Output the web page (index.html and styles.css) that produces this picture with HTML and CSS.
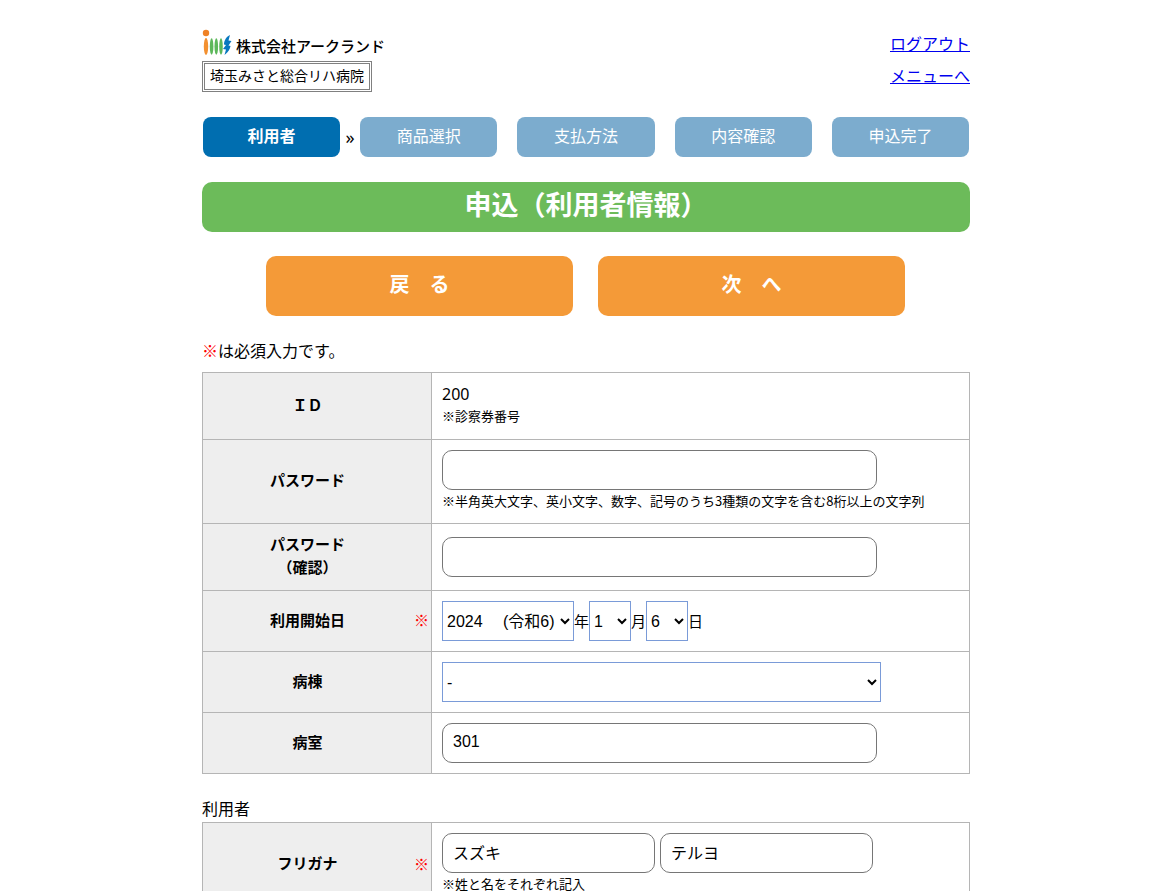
FILE: index.html
```html
<!DOCTYPE html>
<html lang="ja">
<head>
<meta charset="utf-8">
<meta name="viewport" content="width=device-width, initial-scale=1">
<title>申込（利用者情報）</title>
<link rel="stylesheet" href="styles.css">
</head>
<body>
<div class="page">
  <header class="header">
    <div class="brand">
      <div class="logo">
        <svg class="logo-mark" viewBox="0 0 30 28" aria-hidden="true">
          <circle cx="4" cy="4" r="3.200" fill="#ef8226"/>
          <ellipse cx="4" cy="17.500" rx="2.200" ry="8.500" fill="#f39030"/>
          <ellipse cx="9.600" cy="17.500" rx="1.800" ry="8.300" fill="#5cb85a"/>
          <ellipse cx="14.300" cy="17.500" rx="1.800" ry="8.300" fill="#5cb85a"/>
          <ellipse cx="19" cy="17.500" rx="1.800" ry="8.300" fill="#5cb85a"/>
          <path d="M28 6 C24.500 7.500 22 11.500 22 15.500 L24 16 L21 20 L24 20.500 L22.500 26 C26.500 23 28 20 28.500 17 L26.500 16.500 L29.500 12 L26.500 11.500 Z" fill="#0878bf"/>
        </svg>
        <span>株式会社アークランド</span>
      </div>
      <div class="hospital">埼玉みさと総合リハ病院</div>
    </div>
    <nav class="links">
      <a href="#">ログアウト</a>
      <a href="#">メニューへ</a>
    </nav>
  </header>

  <ol class="steps">
    <li class="step current">利用者</li>
    <li class="step">商品選択</li>
    <li class="step">支払方法</li>
    <li class="step">内容確認</li>
    <li class="step">申込完了</li>
  </ol>

  <h1 class="title">申込（利用者情報）</h1>

  <form>
    <div class="actions">
      <button type="button" class="action">戻　る</button>
      <button type="button" class="action">次　へ</button>
    </div>

    <p class="notice"><span class="required">※</span>は必須入力です。</p>

    <table class="form-table">
      <tr>
        <th scope="row"><div class="head"><span class="label">ＩＤ</span></div></th>
        <td><div class="value">200</div><div class="hint hint-id">※診察券番号</div></td>
      </tr>
      <tr>
        <th scope="row"><div class="head"><label class="label" for="pw">パスワード</label></div></th>
        <td><input class="field" type="password" id="pw"><div class="hint">※半角英大文字、英小文字、数字、記号のうち3種類の文字を含む8桁以上の文字列</div></td>
      </tr>
      <tr>
        <th scope="row"><div class="head"><label class="label" for="pw2">パスワード<br>（確認）</label></div></th>
        <td><input class="field" type="password" id="pw2"></td>
      </tr>
      <tr>
        <th scope="row"><div class="head"><label class="label" for="year">利用開始日</label><span class="required">※</span></div></th>
        <td>
          <div class="date">
            <select class="select year" id="year"><option>2024　 (令和6)</option></select><label for="year">年</label>
            <select class="select short" id="month"><option>1</option></select><label for="month">月</label>
            <select class="select short" id="day"><option>6</option></select><label for="day">日</label>
          </div>
        </td>
      </tr>
      <tr>
        <th scope="row"><div class="head"><label class="label" for="ward">病棟</label></div></th>
        <td><select class="select ward" id="ward"><option>-</option></select></td>
      </tr>
      <tr>
        <th scope="row"><div class="head"><label class="label" for="room">病室</label></div></th>
        <td><input class="field" type="text" id="room" value="301"></td>
      </tr>
    </table>

    <h2 class="section">利用者</h2>
    <table class="form-table">
      <tr>
        <th scope="row"><div class="head"><label class="label" for="kana1">フリガナ</label><span class="required">※</span></div></th>
        <td>
          <div class="names">
            <input class="field" type="text" id="kana1" value="スズキ">
            <input class="field" type="text" aria-label="フリガナ（名）" value="テルヨ">
          </div>
          <div class="hint">※姓と名をそれぞれ記入</div>
        </td>
      </tr>
    </table>
  </form>
</div>
</body>
</html>
```

FILE: styles.css
```css
* { box-sizing: border-box; }

body {
  margin: 0;
  background: #fff;
  color: #000;
  font: 16px/24px "Noto Sans", "Noto Sans CJK JP", sans-serif;
}

.page {
  max-width: 770px;
  margin: 0 auto;
  padding: 28px 0 0 2px;
}

.header {
  display: flex;
  justify-content: space-between;
}

.logo {
  display: flex;
  align-items: center;
  gap: 4px;
  height: 33px;
  padding-top: 2px;
  font-size: 15px;
  font-weight: 500;
  font-family: "Noto Sans CJK JP", sans-serif;
}

.logo-mark { width: 30px; height: 28px; margin-bottom: 6px; }

.hospital {
  display: inline-block;
  padding: 0 5px 2px;
  border: 3px double #808080;
  font-size: 14px;
  line-height: 23px;
}

.links {
  display: flex;
  flex-direction: column;
  line-height: 32px;
}

.links a { color: #00e; }

.steps {
  display: grid;
  grid-template-columns: repeat(5, 1fr);
  gap: 20px;
  margin: 25px 0;
  padding: 0 1px;
  list-style: none;
}

.step {
  position: relative;
  border-radius: 8px;
  background: #7cacce;
  color: #fff;
  line-height: 38px;
  height: 40px;
  text-align: center;
}

.step.current { background: #006eb0; font-weight: 700; }

.step.current::after {
  content: "»";
  position: absolute;
  left: 100%;
  width: 20px;
  color: #000;
  font-weight: 400;
  font-size: 18px;
  line-height: 40px;
}

.title {
  margin: 0;
  padding-bottom: 4px;
  border-radius: 10px;
  background: #6cbb5a;
  color: #fff;
  font-size: 27px;
  line-height: 46px;
  text-align: center;
}

.actions {
  display: grid;
  grid-template-columns: 1fr 1fr;
  gap: 25px;
  margin: 24px 65px 0 64px;
}

.action {
  height: 60px;
  padding: 0 0 2px;
  border: 0;
  border-radius: 10px;
  background: #f49a38;
  color: #fff;
  font: inherit;
  font-size: 20px;
  font-weight: 700;
}

.notice { margin: 23px 0 9px; }

.required {
  color: #f00;
  font-weight: 400;
  font-family: "Noto Sans CJK JP", sans-serif;
  line-height: 20px;
}

.form-table {
  width: 100%;
  border-collapse: collapse;
  table-layout: fixed;
}

.form-table th,
.form-table td { border: 1px solid #b5b5b5; }

.form-table th {
  width: 229px;
  padding: 9px 0 11px;
  background: #eee;
  font-size: 15px;
  line-height: 23px;
}

.form-table td { padding: 10px; }

.head { display: flex; align-items: center; padding-right: 2px; }
.label { flex: 1; padding-right: 17px; }
.head .required { width: 15px; }
.label:not(:last-child) { padding-right: 2px; }

.value { line-height: 22px; }

.hint {
  padding-bottom: 2px;
  font-size: 13px;
  line-height: 21px;
  font-family: "Noto Sans CJK JP", sans-serif;
}

.hint-id { line-height: 22px; }

.field,
.select {
  display: block;
  height: 40px;
  max-width: 100%;
  color: #000;
  background: #fff;
  font: 16px "Liberation Sans", "Noto Sans CJK JP", sans-serif;
}

.field {
  width: 435px;
  padding: 0 10px 2px;
  border: 1px solid #767676;
  border-radius: 10px;
}

.select {
  padding: 0;
  border: 1px solid #7a9bd8;
  border-radius: 0;
}

.date { display: flex; align-items: center; font-size: 15px; }
.year { width: 132px; }
.short { width: 42px; }
.ward { width: 439px; }

.names { display: flex; gap: 5px; }
.names .field { width: 213px; }

.section {
  margin: 23px 0 1px;
  font-size: 16px;
  font-weight: 400;
}
```
